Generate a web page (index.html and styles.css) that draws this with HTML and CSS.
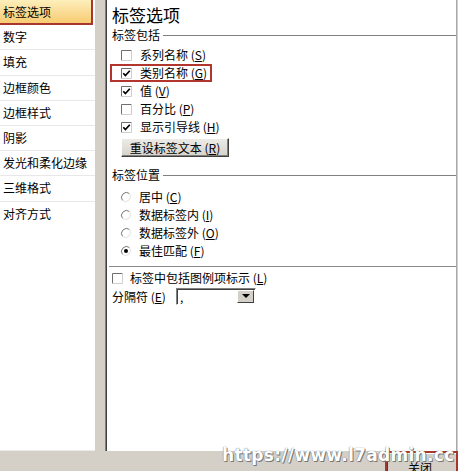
FILE: index.html
```html
<!DOCTYPE html>
<html lang="zh-CN">
<head>
<meta charset="utf-8">
<title>设置数据标签格式</title>
<link rel="stylesheet" href="styles.css">
</head>
<body>
<div class="dialog">
  <div class="main">
    <ul class="nav">
      <li class="nav-item selected">标签选项</li>
      <li class="nav-item">数字</li>
      <li class="nav-item">填充</li>
      <li class="nav-item">边框颜色</li>
      <li class="nav-item">边框样式</li>
      <li class="nav-item">阴影</li>
      <li class="nav-item">发光和柔化边缘</li>
      <li class="nav-item">三维格式</li>
      <li class="nav-item last">对齐方式</li>
    </ul>
    <div class="content">
      <h1 class="title">标签选项</h1>
      <div class="group-head"><span>标签包括</span><span class="rule"></span></div>
      <div class="opts">
        <div class="opt">
          <svg class="cb" viewBox="0 0 11 11"><rect x="0" y="0" width="11" height="11" fill="#fff"/><path d="M0.5 10.5V0.5H10.5" stroke="#6e6e6e" fill="none"/><path d="M10.5 0.5V10.5H0.5" stroke="#cfcfcf" fill="none"/></svg>
          <span>系列名称 (<u>S</u>)</span>
        </div>
        <div class="opt marked">
          <svg class="cb" viewBox="0 0 11 11"><rect x="0" y="0" width="11" height="11" fill="#fff"/><path d="M0.5 10.5V0.5H10.5" stroke="#6e6e6e" fill="none"/><path d="M10.5 0.5V10.5H0.5" stroke="#cfcfcf" fill="none"/><path d="M2.3 5.2L4.4 7.6L8.8 2.8" stroke="#000" stroke-width="1.7" fill="none"/></svg>
          <span>类别名称 (<u>G</u>)</span>
        </div>
        <div class="opt">
          <svg class="cb" viewBox="0 0 11 11"><rect x="0" y="0" width="11" height="11" fill="#fff"/><path d="M0.5 10.5V0.5H10.5" stroke="#6e6e6e" fill="none"/><path d="M10.5 0.5V10.5H0.5" stroke="#cfcfcf" fill="none"/><path d="M2.3 5.2L4.4 7.6L8.8 2.8" stroke="#000" stroke-width="1.7" fill="none"/></svg>
          <span>值 (<u>V</u>)</span>
        </div>
        <div class="opt">
          <svg class="cb" viewBox="0 0 11 11"><rect x="0" y="0" width="11" height="11" fill="#fff"/><path d="M0.5 10.5V0.5H10.5" stroke="#6e6e6e" fill="none"/><path d="M10.5 0.5V10.5H0.5" stroke="#cfcfcf" fill="none"/></svg>
          <span>百分比 (<u>P</u>)</span>
        </div>
        <div class="opt">
          <svg class="cb" viewBox="0 0 11 11"><rect x="0" y="0" width="11" height="11" fill="#fff"/><path d="M0.5 10.5V0.5H10.5" stroke="#6e6e6e" fill="none"/><path d="M10.5 0.5V10.5H0.5" stroke="#cfcfcf" fill="none"/><path d="M2.3 5.2L4.4 7.6L8.8 2.8" stroke="#000" stroke-width="1.7" fill="none"/></svg>
          <span>显示引导线 (<u>H</u>)</span>
        </div>
        <div class="reset-btn">重设标签文本 (<u>R</u>)</div>
      </div>

      <div class="group-head second"><span>标签位置</span><span class="rule"></span></div>
      <div class="opts radios">
        <div class="opt">
          <svg class="rb" viewBox="0 0 12 12"><circle cx="6" cy="6" r="5" fill="#fff"/><path d="M9.5 2.5A5 5 0 0 0 2.5 9.5" stroke="#7a7a7a" fill="none"/><path d="M2.5 9.5A5 5 0 0 0 9.5 2.5" stroke="#e2e2e2" fill="none"/></svg>
          <span>居中 (<u>C</u>)</span>
        </div>
        <div class="opt">
          <svg class="rb" viewBox="0 0 12 12"><circle cx="6" cy="6" r="5" fill="#fff"/><path d="M9.5 2.5A5 5 0 0 0 2.5 9.5" stroke="#7a7a7a" fill="none"/><path d="M2.5 9.5A5 5 0 0 0 9.5 2.5" stroke="#e2e2e2" fill="none"/></svg>
          <span>数据标签内 (<u>I</u>)</span>
        </div>
        <div class="opt">
          <svg class="rb" viewBox="0 0 12 12"><circle cx="6" cy="6" r="5" fill="#fff"/><path d="M9.5 2.5A5 5 0 0 0 2.5 9.5" stroke="#7a7a7a" fill="none"/><path d="M2.5 9.5A5 5 0 0 0 9.5 2.5" stroke="#e2e2e2" fill="none"/></svg>
          <span>数据标签外 (<u>O</u>)</span>
        </div>
        <div class="opt">
          <svg class="rb" viewBox="0 0 12 12"><circle cx="6" cy="6" r="5" fill="#fff"/><path d="M9.5 2.5A5 5 0 0 0 2.5 9.5" stroke="#7a7a7a" fill="none"/><path d="M2.5 9.5A5 5 0 0 0 9.5 2.5" stroke="#e2e2e2" fill="none"/><circle cx="6" cy="6" r="2" fill="#000"/></svg>
          <span>最佳匹配 (<u>F</u>)</span>
        </div>
      </div>

      <div class="sep"></div>

      <div class="opt legend-row">
        <svg class="cb" viewBox="0 0 11 11"><rect x="0" y="0" width="11" height="11" fill="#fff"/><path d="M0.5 10.5V0.5H10.5" stroke="#6e6e6e" fill="none"/><path d="M10.5 0.5V10.5H0.5" stroke="#cfcfcf" fill="none"/></svg>
        <span>标签中包括图例项标示 (<u>L</u>)</span>
      </div>

      <div class="sep-row">
        <span class="sep-label">分隔符 (<u>E</u>)</span>
        <div class="combo">
          <span class="combo-value">,</span>
          <span class="combo-btn"><svg viewBox="0 0 8 4" width="8" height="4"><path d="M0 0H8L4 4Z" fill="#000"/></svg></span>
        </div>
      </div>
    </div>
  </div>
  <div class="footer">
    <div class="close-mark"><div class="close-btn">关闭</div></div>
  </div>
  <div class="watermark">https://www.l7admin.cc</div>
</div>
</body>
</html>
```

FILE: styles.css
```css
html, body {
  margin: 0;
  padding: 0;
}
body {
  background: #d4d0c8;
  font-family: "Noto Sans CJK SC", "Liberation Sans", sans-serif;
  font-size: 12px;
  color: #000;
}
.dialog {
  position: relative;
  width: 458px;
  height: 471px;
  overflow: hidden;
  display: flex;
  flex-direction: column;
}
.main {
  display: flex;
  height: 451px;
  padding-right: 1px;
  flex: none;
}
.nav {
  width: 95px;
  margin: 0;
  padding: 0;
  list-style: none;
  background: #fff;
  border-bottom: 1px solid #ececec;
  box-sizing: border-box;
  flex: none;
}
.nav-item {
  height: 25.2px;
  box-sizing: border-box;
  border-bottom: 1px solid #e8e8e8;
  padding-left: 3px;
  line-height: 24px;
  white-space: nowrap;
}
.nav-item.last {
  border-bottom: none;
}
.nav-item.selected {
  background: linear-gradient(#fdeebb, #f8cc72);
  border-right: 2px solid #a9362e;
  border-bottom: 2px solid #a9362e;
  margin-right: 2px;
  line-height: 23px;
}
.content {
  flex: 1;
  margin-left: 10px;
  background: #fff;
  border-left: 1px solid #808080;
  border-right: 1px solid #a8a8a8;
  box-shadow: inset 1px 0 #404040;
  padding: 4px 0 0 6px;
  box-sizing: border-box;
}
.title {
  margin: 0;
  font-size: 17px;
  font-weight: normal;
  line-height: 22px;
  height: 22px;
}
.group-head {
  display: flex;
  align-items: center;
  height: 18px;
  line-height: 18px;
}
.group-head.second {
  margin-top: 9px;
}
.rule {
  flex: 1;
  height: 0;
  border-top: 1px solid #808080;
  margin-left: 3px;
}
.opts {
  margin-top: 2px;
  padding-left: 9px;
}
.radios {
  margin-top: 4px;
}
.opt {
  display: flex;
  align-items: center;
  height: 18px;
  gap: 8px;
  white-space: nowrap;
  line-height: 18px;
  box-sizing: border-box;
}
.opt.marked {
  border: 2px solid #b3362e;
  margin-left: -11px;
  padding-left: 9px;
  width: 102px;
}
.cb {
  width: 11px;
  height: 11px;
  flex: none;
}
.rb {
  width: 12px;
  height: 12px;
  flex: none;
  margin-left: -1px;
  margin-right: -1px;
}
.reset-btn {
  margin-top: 2px;
  width: 108px;
  height: 19px;
  box-sizing: border-box;
  background: linear-gradient(#ecebe6, #d6d3cb);
  border: 1px solid;
  border-color: #fff #404040 #404040 #fff;
  box-shadow: inset -1px -1px #808080;
  text-align: center;
  line-height: 17px;
  white-space: nowrap;
}
.sep {
  margin-top: 6px;
  margin-left: -3px;
  border-top: 1px solid #8a8a8a;
}
.legend-row {
  margin-top: 2px;
  gap: 7px;
}
.sep-row {
  display: flex;
  align-items: center;
  height: 18px;
  white-space: nowrap;
}
.sep-label {
  width: 64px;
  flex: none;
}
.combo {
  width: 80px;
  height: 17px;
  box-sizing: border-box;
  border: 1px solid;
  border-color: #808080 #fff #fff #808080;
  box-shadow: inset 1px 1px #404040;
  background: #fff;
  display: flex;
  align-items: center;
  justify-content: space-between;
  padding: 1px 1px 1px 3px;
}
.combo-value {
  line-height: 13px;
}
.combo-btn {
  width: 17px;
  height: 13px;
  box-sizing: border-box;
  background: #d4d0c8;
  border: 1px solid;
  border-color: #fff #404040 #404040 #fff;
  display: flex;
  align-items: center;
  justify-content: center;
}
.footer {
  flex: 1;
  display: flex;
  justify-content: flex-end;
}
.close-mark {
  width: 73px;
  height: 24px;
  box-sizing: border-box;
  border: 2px solid #a9362e;
  border-bottom: none;
  flex: none;
}
.close-btn {
  height: 100%;
  box-sizing: border-box;
  background: #d4d0c8;
  border-left: 1px solid #404040;
  border-top: 1px solid #fff;
  text-align: center;
  padding-top: 7px;
  line-height: 14px;
  padding-right: 4px;
}
.watermark {
  position: absolute;
  left: 222px;
  top: 445px;
  font-family: "DejaVu Sans", sans-serif;
  font-weight: bold;
  font-size: 17px;
  letter-spacing: 0.3px;
  color: #fff;
  line-height: 20px;
  white-space: nowrap;
  text-shadow: 1px 1px 0 #777, 0 0 1px #444;
}
```
